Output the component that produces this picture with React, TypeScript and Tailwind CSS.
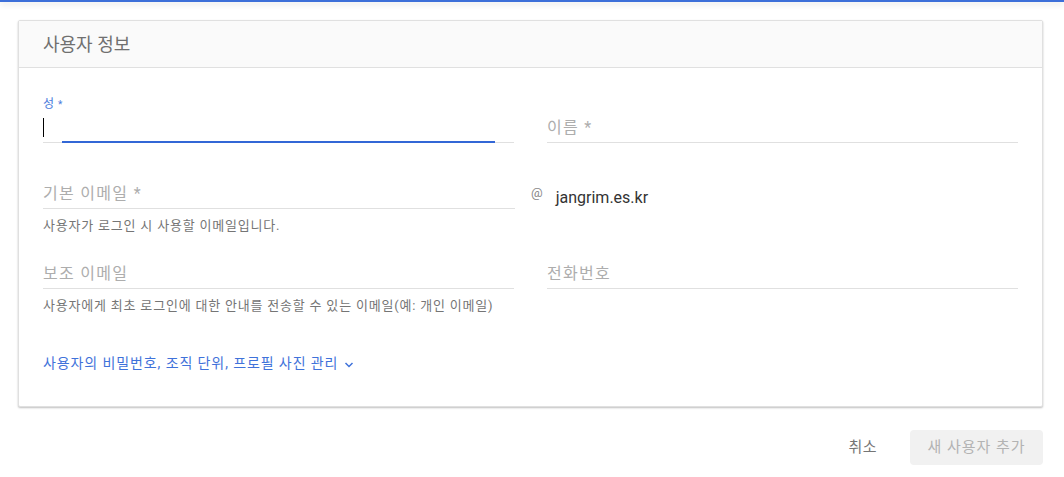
import React from "react";

const font = { fontFamily: 'Roboto, "Noto Sans CJK KR", sans-serif' };

function Field({
  placeholder,
  label,
  focused,
  helper,
  className = "",
}: {
  placeholder?: string;
  label?: string;
  focused?: boolean;
  helper?: string;
  className?: string;
}) {
  return (
    <div className={`flex flex-col ${className}`}>
      <div className="h-4 text-[12px] leading-4 text-[#4a7bdc] tracking-[0.5px]">
        {label && (
          <span>
            {label} <span className="text-[10px]">*</span>
          </span>
        )}
      </div>
      <div className="relative h-[31px] border-b border-[#e0e0e0] flex items-center">
        {focused && <div className="w-px h-[19px] bg-black mt-[1px]" />}
        {placeholder && (
          <span className="text-[16px] tracking-[1.3px] text-[#adadad] mt-[1px]">{placeholder}</span>
        )}
        {focused && (
          <div className="absolute left-[19px] right-[19px] -bottom-px h-[2px] bg-[#3367d6]" />
        )}
      </div>
      {helper && (
        <div className="mt-[9px] text-[13px] tracking-[0.8px] leading-4 text-[#757575]">{helper}</div>
      )}
    </div>
  );
}

export default function App() {
  return (
    <div className="min-h-[477px] bg-white" style={font}>
      {/* top bar */}
      <div className="h-[2px] bg-[#3c6fd9] shadow-[0_2px_6px_rgba(0,0,0,0.18)]" />

      <div className="pt-[18px] pl-[18px] pr-[21px]">
        {/* card */}
        <div className="border border-[#e0e0e0] rounded-[2px] bg-white shadow-[0_1px_2px_rgba(0,0,0,0.25)]">
          <div className="h-[47px] bg-[#fafafa] border-b border-[#e0e0e0] flex items-center px-6">
            <span className="text-[18px] text-[#707070]">사용자 정보</span>
          </div>

          <div className="pl-6 pr-6 pt-[28px] pb-[33px]">
            <div className="grid grid-cols-2 gap-x-[33px]">
              <Field label="성" focused />
              <Field placeholder="이름 *" />
            </div>

            <div className="flex mt-[19px]">
              <Field className="w-[472px]" placeholder="기본 이메일 *" helper="사용자가 로그인 시 사용할 이메일입니다." />
              <div className="flex items-start pt-[16px] ml-[16px]">
                <div className="h-[31px] flex items-center gap-[13px]">
                  <span className="text-[13px] text-[#888] -mt-[2px]">@</span>
                  <span className="text-[16px] text-[#333] mt-[8px]">jangrim.es.kr</span>
                </div>
              </div>
            </div>

            <div className="grid grid-cols-2 gap-x-[33px] mt-[8px]">
              <Field
                placeholder="보조 이메일"
                helper="사용자에게 최초 로그인에 대한 안내를 전송할 수 있는 이메일(예: 개인 이메일)"
              />
              <Field placeholder="전화번호" />
            </div>

            <div className="mt-[39px] flex items-center gap-[5px] text-[14px] tracking-[0.9px] leading-5 text-[#3f72da]">
              <span>사용자의 비밀번호, 조직 단위, 프로필 사진 관리</span>
              <svg width="12" height="12" viewBox="0 0 24 24" className="mt-[3px]">
                <path d="M5 8l7 7 7-7" fill="none" stroke="#3f72da" strokeWidth="3" />
              </svg>
            </div>
          </div>
        </div>

        {/* actions */}
        <div className="flex justify-end items-center mt-[23px]">
          <button className="text-[15px] tracking-[0.5px] text-[#757575] px-4 h-[35px]">취소</button>
          <button className="ml-[17px] w-[133px] h-[35px] rounded bg-[#f1f1f1] text-[15px] tracking-[1px] text-[#b3b3b3]">
            새 사용자 추가
          </button>
        </div>
      </div>
    </div>
  );
}
